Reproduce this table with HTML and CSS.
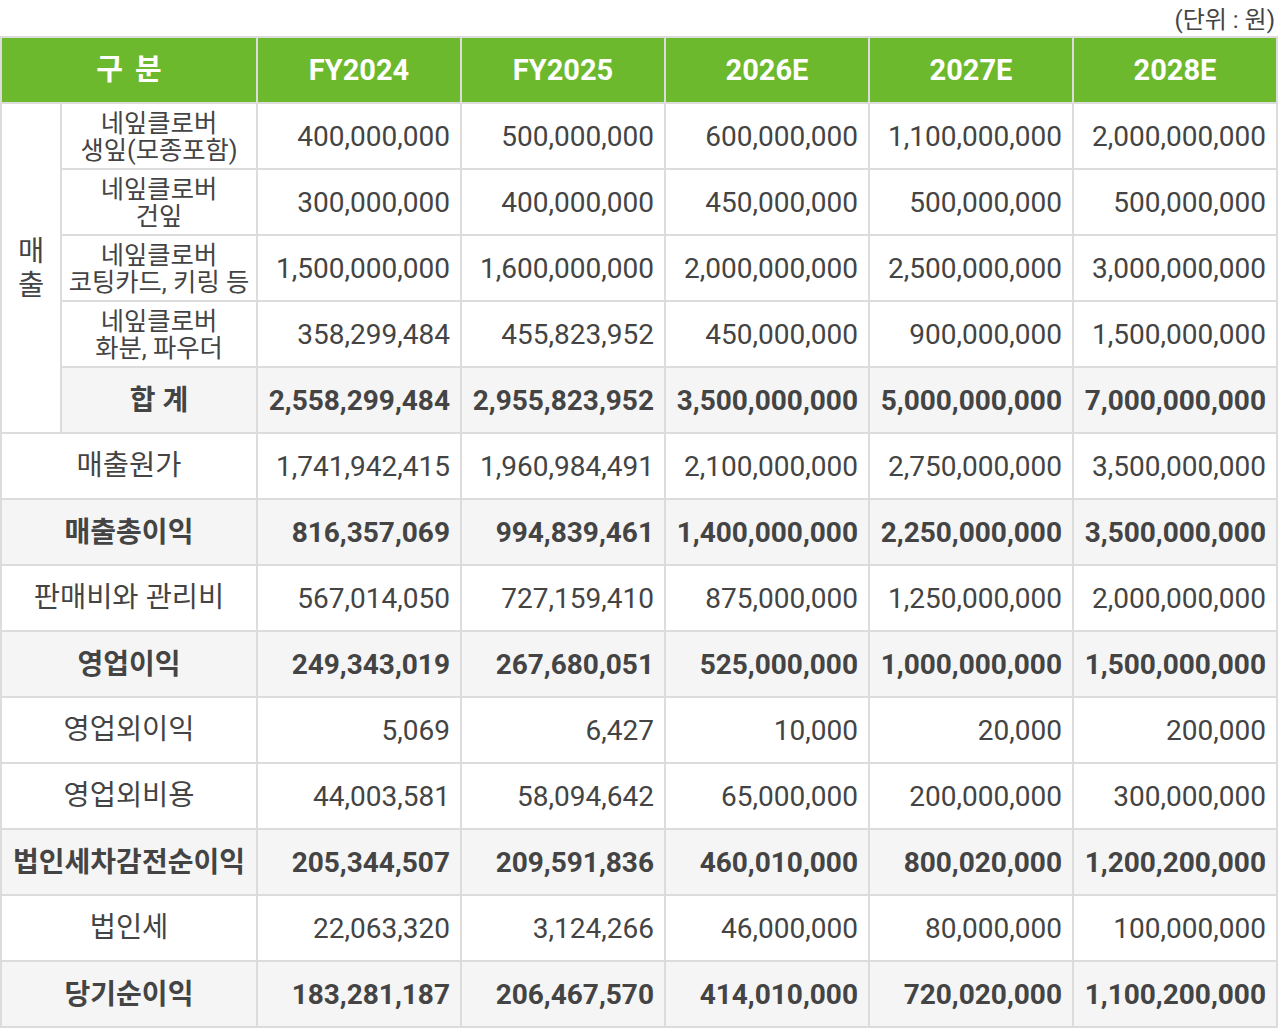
FILE: index.html
```html
<!DOCTYPE html>
<html lang="ko">
<head>
<meta charset="utf-8">
<title>손익 추정</title>
<link rel="stylesheet" href="styles.css">
</head>
<body>
<div class="page">
  <div class="unit">(단위 : 원)</div>
  <div class="grid">
    <div class="cell head span2 wide">구 분</div>
    <div class="cell head">FY2024</div>
    <div class="cell head">FY2025</div>
    <div class="cell head">2026E</div>
    <div class="cell head">2027E</div>
    <div class="cell head">2028E</div>

    <div class="cell group">매<br>출</div>

    <div class="cell sub">네잎클로버<br>생잎(모종포함)</div>
    <div class="cell num">400,000,000</div>
    <div class="cell num">500,000,000</div>
    <div class="cell num">600,000,000</div>
    <div class="cell num">1,100,000,000</div>
    <div class="cell num">2,000,000,000</div>

    <div class="cell sub">네잎클로버<br>건잎</div>
    <div class="cell num">300,000,000</div>
    <div class="cell num">400,000,000</div>
    <div class="cell num">450,000,000</div>
    <div class="cell num">500,000,000</div>
    <div class="cell num">500,000,000</div>

    <div class="cell sub">네잎클로버<br>코팅카드, 키링 등</div>
    <div class="cell num">1,500,000,000</div>
    <div class="cell num">1,600,000,000</div>
    <div class="cell num">2,000,000,000</div>
    <div class="cell num">2,500,000,000</div>
    <div class="cell num">3,000,000,000</div>

    <div class="cell sub">네잎클로버<br>화분, 파우더</div>
    <div class="cell num">358,299,484</div>
    <div class="cell num">455,823,952</div>
    <div class="cell num">450,000,000</div>
    <div class="cell num">900,000,000</div>
    <div class="cell num">1,500,000,000</div>

    <div class="cell label bold shade">합 계</div>
    <div class="cell num bold shade">2,558,299,484</div>
    <div class="cell num bold shade">2,955,823,952</div>
    <div class="cell num bold shade">3,500,000,000</div>
    <div class="cell num bold shade">5,000,000,000</div>
    <div class="cell num bold shade">7,000,000,000</div>

    <div class="cell label span2">매출원가</div>
    <div class="cell num">1,741,942,415</div>
    <div class="cell num">1,960,984,491</div>
    <div class="cell num">2,100,000,000</div>
    <div class="cell num">2,750,000,000</div>
    <div class="cell num">3,500,000,000</div>

    <div class="cell label span2 bold shade">매출총이익</div>
    <div class="cell num bold shade">816,357,069</div>
    <div class="cell num bold shade">994,839,461</div>
    <div class="cell num bold shade">1,400,000,000</div>
    <div class="cell num bold shade">2,250,000,000</div>
    <div class="cell num bold shade">3,500,000,000</div>

    <div class="cell label span2">판매비와 관리비</div>
    <div class="cell num">567,014,050</div>
    <div class="cell num">727,159,410</div>
    <div class="cell num">875,000,000</div>
    <div class="cell num">1,250,000,000</div>
    <div class="cell num">2,000,000,000</div>

    <div class="cell label span2 bold shade">영업이익</div>
    <div class="cell num bold shade">249,343,019</div>
    <div class="cell num bold shade">267,680,051</div>
    <div class="cell num bold shade">525,000,000</div>
    <div class="cell num bold shade">1,000,000,000</div>
    <div class="cell num bold shade">1,500,000,000</div>

    <div class="cell label span2">영업외이익</div>
    <div class="cell num">5,069</div>
    <div class="cell num">6,427</div>
    <div class="cell num">10,000</div>
    <div class="cell num">20,000</div>
    <div class="cell num">200,000</div>

    <div class="cell label span2">영업외비용</div>
    <div class="cell num">44,003,581</div>
    <div class="cell num">58,094,642</div>
    <div class="cell num">65,000,000</div>
    <div class="cell num">200,000,000</div>
    <div class="cell num">300,000,000</div>

    <div class="cell label span2 bold shade">법인세차감전순이익</div>
    <div class="cell num bold shade">205,344,507</div>
    <div class="cell num bold shade">209,591,836</div>
    <div class="cell num bold shade">460,010,000</div>
    <div class="cell num bold shade">800,020,000</div>
    <div class="cell num bold shade">1,200,200,000</div>

    <div class="cell label span2">법인세</div>
    <div class="cell num">22,063,320</div>
    <div class="cell num">3,124,266</div>
    <div class="cell num">46,000,000</div>
    <div class="cell num">80,000,000</div>
    <div class="cell num">100,000,000</div>

    <div class="cell label span2 bold shade">당기순이익</div>
    <div class="cell num bold shade">183,281,187</div>
    <div class="cell num bold shade">206,467,570</div>
    <div class="cell num bold shade">414,010,000</div>
    <div class="cell num bold shade">720,020,000</div>
    <div class="cell num bold shade">1,100,200,000</div>
  </div>
</div>
</body>
</html>
```

FILE: styles.css
```css
html, body {
  margin: 0;
  padding: 0;
  background: #ffffff;
}

.page {
  width: 1278px;
  font-family: Roboto, "Noto Sans CJK KR", sans-serif;
  color: #444444;
}

.unit {
  height: 36px;
  box-sizing: border-box;
  padding-top: 2px;
  line-height: 36px;
  text-align: right;
  font-size: 24px;
  padding-right: 3px;
}

.grid {
  display: grid;
  grid-template-columns: 58px 194px repeat(5, 202px);
  grid-auto-rows: 64px;
  gap: 2px;
  padding: 2px;
  background: #dcdcdc;
}

.cell {
  background: #ffffff;
  display: flex;
  align-items: center;
  justify-content: center;
  text-align: center;
  font-size: 28px;
  line-height: 1;
  white-space: nowrap;
  padding-top: 1px;
  box-sizing: border-box;
}

.span2 {
  grid-column: span 2;
}

.head {
  background: #6db92e;
  color: #ffffff;
  font-weight: 700;
  font-size: 29px;
}

.wide {
  word-spacing: 5px;
}

.group {
  grid-row: span 5;
  line-height: 34px;
  font-size: 28.5px;
}

.label {
  font-size: 28.5px;
}

.label.bold {
  font-size: 28px;
}

.sub {
  font-size: 25.3px;
  line-height: 27px;
}

.num {
  justify-content: flex-end;
  padding-right: 10px;
}

.bold {
  font-weight: 700;
}

.shade {
  background: #f5f5f5;
}
```
